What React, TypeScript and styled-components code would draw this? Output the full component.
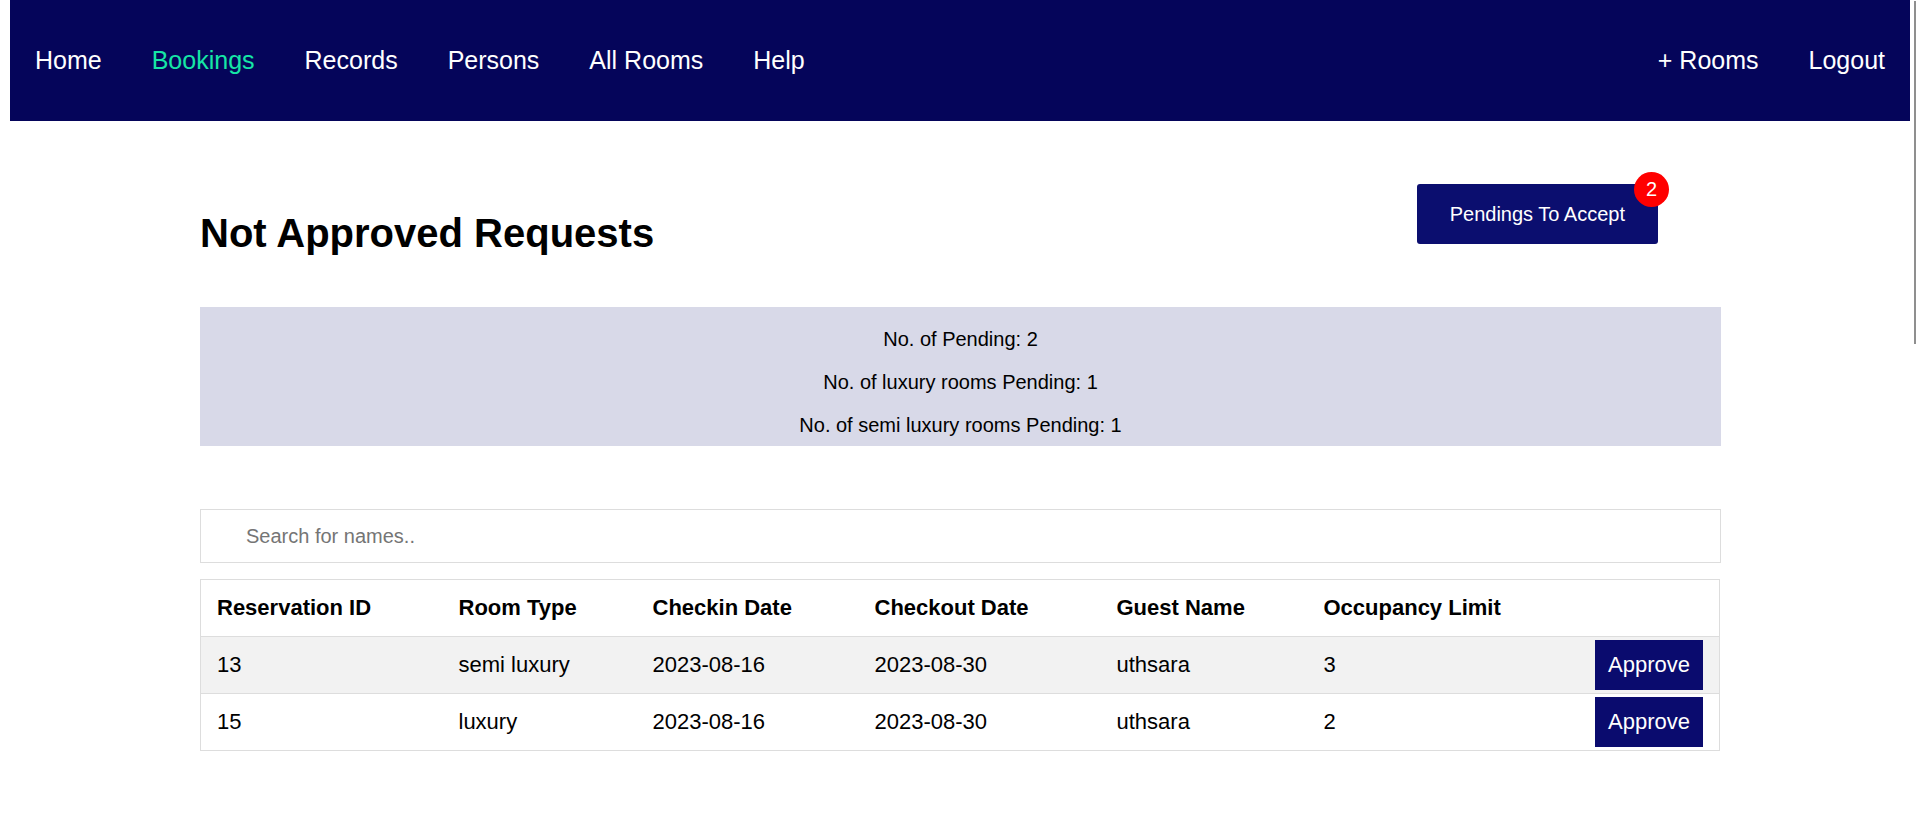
import React from "react";
import styled, { createGlobalStyle } from "styled-components";

const GlobalStyle = createGlobalStyle`
  *, *::before, *::after { box-sizing: border-box; }
  html, body { margin: 0; padding: 0; background: #ffffff; }
  body { font-family: "Liberation Sans", Arial, sans-serif; color: #000; }
`;

const NavBar = styled.nav`
  height: 121px;
  margin: 0 10px;
  background: #05055a;
  display: flex;
  align-items: center;
  justify-content: space-between;
`;

const NavGroup = styled.div`
  display: flex;
  align-items: center;
`;

const NavLink = styled.a<{ $active?: boolean }>`
  padding: 0 25px;
  font-size: 25px;
  color: ${(p) => (p.$active ? "#16e6a6" : "#ffffff")};
  text-decoration: none;
  cursor: pointer;
`;

const Main = styled.main`
  width: 1522px;
  margin: 0 auto;
  padding-left: 1px;
  display: flex;
  flex-direction: column;
`;

const HeaderRow = styled.div`
  margin-top: 63px;
  display: flex;
  justify-content: space-between;
  align-items: flex-start;
`;

const Title = styled.h1`
  margin: 26px 0 0 0;
  font-size: 40px;
  font-weight: bold;
  line-height: 46px;
`;

const PendingButton = styled.button`
  position: relative;
  margin-right: 63px;
  height: 60px;
  padding: 0 33px;
  border: none;
  border-radius: 3px;
  background: #0b0e6f;
  color: #ffffff;
  font-family: "Liberation Sans", Arial, sans-serif;
  font-size: 20px;
  cursor: pointer;
`;

const Badge = styled.span`
  position: absolute;
  top: -12px;
  right: -11px;
  width: 35px;
  height: 35px;
  border-radius: 50%;
  background: #ff0000;
  color: #ffffff;
  font-size: 20px;
  display: flex;
  align-items: center;
  justify-content: center;
`;

const Summary = styled.section`
  margin-top: 51px;
  padding: 21px 0 9px;
  background: #d8d9e8;
  display: flex;
  flex-direction: column;
  align-items: center;
  gap: 20px;
`;

const SummaryLine = styled.p`
  margin: 0;
  font-size: 20px;
  line-height: 23px;
`;

const SearchInput = styled.input`
  margin-top: 63px;
  height: 54px;
  width: 100%;
  padding: 0 12px 0 45px;
  border: 1px solid #dddddd;
  font-family: "Liberation Sans", Arial, sans-serif;
  font-size: 20px;
  outline: none;
  &::placeholder { color: #757575; }
`;

const Table = styled.table`
  margin-top: 16px;
  width: 1520px;
  border-collapse: collapse;
  table-layout: fixed;
  border: 1px solid #dddddd;
  font-size: 22px;
`;

const Row = styled.tr<{ $shade?: boolean }>`
  border-bottom: 1px solid #dddddd;
  background: ${(p) => (p.$shade ? "#f2f2f2" : "#ffffff")};
`;

const HeadCell = styled.th`
  padding: 16px;
  text-align: left;
  font-weight: bold;
  line-height: 24px;
`;

const Cell = styled.td<{ $action?: boolean }>`
  padding: ${(p) => (p.$action ? "3px 16px" : "16px")};
  text-align: ${(p) => (p.$action ? "right" : "left")};
  line-height: 24px;
  vertical-align: middle;
`;

const ApproveButton = styled.button`
  height: 50px;
  padding: 0 13px;
  border: none;
  background: #0a0b6e;
  color: #ffffff;
  font-family: "Liberation Sans", Arial, sans-serif;
  font-size: 22px;
  cursor: pointer;
  vertical-align: middle;
`;

const ScrollThumb = styled.div`
  position: fixed;
  top: 1px;
  right: 4px;
  width: 2px;
  height: 343px;
  background: #8f8f8f;
`;

const colWidths = [242, 194, 222, 242, 207, undefined, 141];

const rows = [
  { id: 13, type: "semi luxury", checkin: "2023-08-16", checkout: "2023-08-30", guest: "uthsara", limit: 3 },
  { id: 15, type: "luxury", checkin: "2023-08-16", checkout: "2023-08-30", guest: "uthsara", limit: 2 },
];

export default function App() {
  return (
    <>
      <GlobalStyle />
      <NavBar>
        <NavGroup>
          <NavLink>Home</NavLink>
          <NavLink $active>Bookings</NavLink>
          <NavLink>Records</NavLink>
          <NavLink>Persons</NavLink>
          <NavLink>All Rooms</NavLink>
          <NavLink>Help</NavLink>
        </NavGroup>
        <NavGroup>
          <NavLink>+ Rooms</NavLink>
          <NavLink>Logout</NavLink>
        </NavGroup>
      </NavBar>
      <Main>
        <HeaderRow>
          <Title>Not Approved Requests</Title>
          <PendingButton>
            Pendings To Accept
            <Badge>2</Badge>
          </PendingButton>
        </HeaderRow>
        <Summary>
          <SummaryLine>No. of Pending: 2</SummaryLine>
          <SummaryLine>No. of luxury rooms Pending: 1</SummaryLine>
          <SummaryLine>No. of semi luxury rooms Pending: 1</SummaryLine>
        </Summary>
        <SearchInput type="text" placeholder="Search for names.." />
        <Table>
          <colgroup>
            {colWidths.map((w, i) => (
              <col key={i} style={w ? { width: `${w}px` } : undefined} />
            ))}
          </colgroup>
          <thead>
            <Row>
              <HeadCell>Reservation ID</HeadCell>
              <HeadCell>Room Type</HeadCell>
              <HeadCell>Checkin Date</HeadCell>
              <HeadCell>Checkout Date</HeadCell>
              <HeadCell>Guest Name</HeadCell>
              <HeadCell>Occupancy Limit</HeadCell>
              <HeadCell />
            </Row>
          </thead>
          <tbody>
            {rows.map((r, i) => (
              <Row key={r.id} $shade={i % 2 === 0}>
                <Cell>{r.id}</Cell>
                <Cell>{r.type}</Cell>
                <Cell>{r.checkin}</Cell>
                <Cell>{r.checkout}</Cell>
                <Cell>{r.guest}</Cell>
                <Cell>{r.limit}</Cell>
                <Cell $action>
                  <ApproveButton>Approve</ApproveButton>
                </Cell>
              </Row>
            ))}
          </tbody>
        </Table>
      </Main>
      <ScrollThumb />
    </>
  );
}
